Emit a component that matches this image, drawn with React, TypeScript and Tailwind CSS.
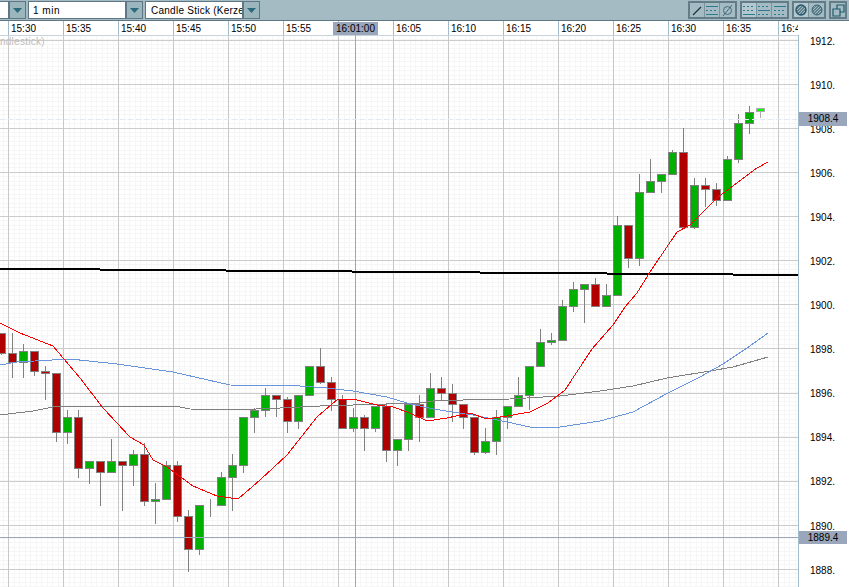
const candles: [number, "g" | "r", number, number, number, number][] = [
  [1.5, "r", 333, 353, 333, 355],
  [12.5, "r", 353, 362, 333, 378],
  [23.5, "g", 351, 362, 344, 378],
  [34.5, "r", 351, 371, 351, 376],
  [45.5, "r", 371, 373, 366, 400],
  [56.5, "r", 373, 432, 373, 442],
  [67.5, "g", 417, 432, 410, 444],
  [78.5, "r", 417, 468, 410, 478],
  [89.5, "g", 461, 468, 461, 484],
  [100.5, "r", 461, 472, 461, 506],
  [111.5, "g", 461, 472, 439, 472],
  [122.5, "r", 461, 465, 461, 511],
  [133.5, "g", 454, 465, 450, 486],
  [144.5, "r", 454, 501, 443, 506],
  [155.5, "g", 499, 501, 483, 524],
  [166.5, "g", 465, 499, 461, 499],
  [177.5, "r", 465, 516, 461, 522],
  [188.5, "r", 516, 549, 510, 572],
  [199.5, "g", 505, 549, 505, 555],
  [210.5, "g", 505, 505, 499, 517],
  [221.5, "g", 477, 505, 472, 505],
  [232.5, "g", 465, 477, 454, 511],
  [243.5, "g", 417, 465, 417, 473],
  [254.5, "g", 410, 417, 408, 433],
  [265.5, "g", 395, 410, 388, 417],
  [276.5, "r", 395, 399, 395, 417],
  [287.5, "r", 399, 421, 397, 433],
  [298.5, "g", 395, 421, 395, 429],
  [309.5, "g", 366, 395, 366, 395],
  [320.5, "r", 366, 382, 348, 384],
  [331.5, "r", 382, 399, 377, 411],
  [342.5, "r", 399, 428, 395, 428],
  [353.5, "g", 417, 428, 408, 432],
  [364.5, "r", 417, 428, 415, 451],
  [375.5, "g", 406, 428, 406, 432],
  [386.5, "r", 406, 450, 403, 462],
  [397.5, "g", 439, 450, 439, 466],
  [408.5, "g", 404, 439, 404, 451],
  [419.5, "r", 404, 417, 395, 442],
  [430.5, "g", 388, 417, 373, 417],
  [441.5, "r", 388, 393, 377, 400],
  [452.5, "r", 393, 404, 384, 422],
  [463.5, "r", 404, 417, 404, 429],
  [474.5, "r", 417, 452, 417, 455],
  [485.5, "g", 441, 452, 428, 454],
  [496.5, "g", 417, 441, 410, 455],
  [507.5, "g", 406, 417, 406, 429],
  [518.5, "g", 395, 406, 377, 406],
  [529.5, "g", 366, 395, 366, 410],
  [540.5, "g", 342, 366, 329, 366],
  [551.5, "g", 340, 342, 333, 345],
  [562.5, "g", 306, 340, 300, 340],
  [573.5, "g", 289, 306, 282, 312],
  [584.5, "g", 284, 289, 284, 323],
  [595.5, "r", 284, 306, 278, 306],
  [606.5, "g", 295, 306, 284, 306],
  [617.5, "g", 225, 295, 216, 295],
  [628.5, "r", 225, 258, 225, 268],
  [639.5, "g", 192, 258, 174, 266],
  [650.5, "g", 181, 192, 159, 192],
  [661.5, "g", 174, 181, 174, 193],
  [672.5, "g", 152, 174, 150, 174],
  [683.5, "r", 152, 227, 128, 227],
  [694.5, "g", 185, 227, 178, 229],
  [705.5, "r", 185, 189, 178, 207],
  [716.5, "r", 189, 200, 183, 206],
  [727.5, "g", 159, 200, 156, 200],
  [738.5, "g", 123, 159, 114, 163],
  [749.5, "g", 112, 123, 106, 134],
];

const redLine =
  "0,323 20,333 53,346 80,378 103,408 130,437 144,445 153,460 167,467 193,486 217,496 238,499 260,480 287,455 317,417 338,399 357,400 377,405 393,407 410,413 427,421 447,418 470,413 487,419 507,416 530,412 548,403 565,390 592,349 613,325 625,307 637,293 650,272 677,232 690,225 717,198 737,183 757,168 768,162";
const blueLine =
  "0,365 17,362 70,359 117,364 173,372 230,385 300,386 327,388 353,391 387,397 407,403 433,409 473,415 507,422 530,427 560,427 600,421 633,412 668,393 700,377 723,364 747,348 768,333";
const greyLine =
  "0,415 33,411 58,406 123,406 180,407 190,409 233,410 280,408 320,406 387,404 420,403 433,401 463,400 510,399 560,396 600,391 633,386 667,378 710,371 733,367 768,357";

const blackLine = [
  [0, 100, 269],
  [100, 226, 270],
  [226, 352, 271],
  [352, 480, 272],
  [480, 607, 273],
  [607, 733, 274],
  [733, 798, 275],
];

const majorY = [40, 84, 128, 172, 216, 260, 304, 348, 393, 437, 481, 525, 569];
const majorX = [8, 63, 118, 173, 228, 283, 338, 393, 448, 503, 558, 613, 668, 723, 778];
const minorY = Array.from({ length: 126 }, (_, i) => Math.round(35 + i * 4.41) + 0.5);
const minorX = Array.from({ length: 146 }, (_, i) => Math.round(2.5 + i * 5.5) + 0.5);

const times = ["15:30", "15:35", "15:40", "15:45", "15:50", "15:55", "", "16:05", "16:10", "16:15", "16:20", "16:25", "16:30", "16:35", "16:40"];
const prices = ["1912.", "1910.", "1908.", "1906.", "1904.", "1902.", "1900.", "1898.", "1896.", "1894.", "1892.", "1890.", "1888."];

function Arrow() {
  return (
    <div className="w-[17px] h-[18px] bg-[#9cb6be] border border-[#5f7684] flex items-center justify-center">
      <svg width="9" height="5" viewBox="0 0 9 5">
        <path d="M0 0h9L4.5 5z" fill="#2a6a7c" />
      </svg>
    </div>
  );
}

// each line of the icon is either solid or dashed
function Lines({ dash }: { dash: [boolean, boolean, boolean] }) {
  return (
    <svg width="12" height="12" viewBox="0 0 12 12" shapeRendering="crispEdges">
      <path d="M0 2.500h12" stroke="#2a7a90" strokeDasharray={dash[0] ? "2 2" : undefined} />
      <path d="M0 6.500h12" stroke="#2a7a90" strokeDasharray={dash[1] ? "2 2" : undefined} />
      <path d="M0 10.500h12" stroke="#2a7a90" strokeDasharray={dash[2] ? "2 2" : undefined} />
    </svg>
  );
}

function Group({ children }: { children: React.ReactNode }) {
  return <div className="flex border-2 border-[#647b88] divide-x divide-[#7d929d]">{children}</div>;
}

function Cell({ children, pressed }: { children: React.ReactNode; pressed?: boolean }) {
  return (
    <div className={pressed ? "w-[15px] h-[14px] flex items-center justify-center bg-[#b4c8cf]" : "w-[15px] h-[14px] flex items-center justify-center"}>
      {children}
    </div>
  );
}

function Hatch({ ring }: { ring?: boolean }) {
  return (
    <svg width="12" height="12" viewBox="0 0 12 12">
      <circle cx="6" cy="6" r="5" fill="#5f7f8c" />
      <path d="M2.500 3.500l2-2M1.500 6.500l5-5M2.500 8.500l6-6M4 10l6-6M7 10l3-3" stroke="#c4d4da" strokeWidth="0.700" />
      <circle cx="6" cy="6" r="5" fill="none" stroke="#24586a" strokeWidth={ring ? 1.400 : 0.800} />
    </svg>
  );
}

export default function App() {
  return (
    <div className="w-[849px] h-[587px] overflow-hidden relative bg-white flex flex-col font-['Liberation_Sans',Arial,sans-serif] text-[10px] text-black">
      {/* toolbar */}
      <div className="h-[21px] shrink-0 bg-[#a5bbc3] border-b border-[#5f7684] flex items-center">
        <div className="w-[9px] h-[18px] bg-white border-y border-r border-[#5f7684]" />
        <Arrow />
        <div className="w-[98px] h-[18px] ml-[2px] bg-white border border-[#5f7684] flex items-center pl-[4px] text-[10px] tracking-[0.5px]">1 min</div>
        <Arrow />
        <div className="w-[98px] h-[18px] ml-[2px] bg-white border border-[#5f7684] flex items-center pl-[5px] tracking-[0.25px] whitespace-nowrap overflow-hidden">Candle Stick (Kerze</div>
        <Arrow />
        <div className="ml-auto pr-[2px] flex items-center gap-[3px]">
          <Group>
            <Cell>
              <svg width="12" height="12" viewBox="0 0 12 12"><path d="M2 11L10 3" stroke="#24343c" strokeWidth="1.200" /></svg>
            </Cell>
            <Cell><Lines dash={[false, true, false]} /></Cell>
            <Cell>
              <svg width="13" height="13" viewBox="0 0 13 13" fill="none"><circle cx="6.500" cy="6.500" r="4" stroke="#2f5866" strokeWidth="0.800" /><path d="M2 12L11 1" stroke="#2f5866" strokeWidth="0.800" /></svg>
            </Cell>
          </Group>
          <Group>
            <Cell pressed><Lines dash={[true, true, false]} /></Cell>
            <Cell><Lines dash={[true, false, true]} /></Cell>
            <Cell><Lines dash={[false, true, true]} /></Cell>
          </Group>
          <Group>
            <Cell pressed><Hatch ring /></Cell>
            <Cell><Hatch /></Cell>
          </Group>
          <Group>
            <div className="w-[14px] h-[14px] flex items-center justify-center">
              <svg width="13" height="13" viewBox="0 0 13 13" fill="none" stroke="#1f5c70" strokeWidth="1.200"><path d="M1 5h7v7H1z" /><path d="M5 5V1h7v7H8" /></svg>
            </div>
          </Group>
        </div>
      </div>

      {/* time axis */}
      <div className="h-[14px] shrink-0 flex bg-white pl-[8px] w-[798px] overflow-hidden">
        {times.map((t, i) => (
          <div key={i} className="w-[55px] shrink-0 border-l border-[#a0bcc8] pl-[2px] leading-[15px] whitespace-nowrap">{t}</div>
        ))}
      </div>

      {/* chart and price scale */}
      <div className="flex flex-1 min-h-0">
        <svg width="799" height="552" viewBox="0 35 799 552" className="shrink-0 block">
          <g shapeRendering="crispEdges">
            {minorY.map((y) => (
              <line key={y} x1="0" x2="798" y1={y} y2={y} stroke="#f6f6f6" />
            ))}
            {minorX.map((x) => (
              <line key={x} x1={x} x2={x} y1="35" y2="587" stroke="#f6f6f6" />
            ))}
            {majorY.map((y) => (
              <line key={y} x1="0" x2="798" y1={y + 0.5} y2={y + 0.5} stroke="#cccccc" />
            ))}
            {majorX.map((x) => (
              <line key={x} x1={x + 0.5} x2={x + 0.5} y1="35" y2="587" stroke="#c8c8c8" />
            ))}
            <line x1="0" x2="798" y1="35.5" y2="35.5" stroke="#c8d4da" />
            <line x1="798.5" x2="798.5" y1="35" y2="587" stroke="#a0bcc8" />
            <line x1="355.5" x2="355.5" y1="35" y2="587" stroke="#9aa6bc" />
            {candles.map(([x, c, top, bottom, hi, lo]) => (
              <g key={x}>
                <line x1={x} x2={x} y1={hi} y2={lo} stroke="#808080" />
                <rect x={x - 4} y={top + 0.5} width="8" height={Math.max(bottom - top, 0)} fill={c === "g" ? "#00b000" : "#b00000"} stroke="#808080" />
              </g>
            ))}
            <line x1="760.5" x2="760.5" y1="112" y2="118" stroke="#aaaaaa" />
            <rect x="756.5" y="108.5" width="8" height="3" fill="#00ff00" stroke="#aaaaaa" />
            {blackLine.map(([a, b, y]) => (
              <rect key={a} x={a} y={y - 1} width={b - a} height="2" fill="#000000" />
            ))}
            <line x1="0" x2="798" y1="119.5" y2="119.5" stroke="#e2e8f5" strokeDasharray="5 3" />
            <line x1="0" x2="798" y1="537.5" y2="537.5" stroke="#9aa6bc" />
          </g>
          <g fill="none" strokeWidth="1" shapeRendering="crispEdges">
            <polyline points={greyLine} stroke="#808080" />
            <polyline points={blueLine} stroke="#6a94dc" />
            <polyline points={redLine} stroke="#ff0000" />
          </g>
        </svg>
        <div className="w-[50px] overflow-hidden">
          <div className="flex flex-col mt-[-16px] pl-[11px]">
            {prices.map((p) => (
              <div key={p} className="h-[44.1px] shrink-0 flex items-center">{p}</div>
            ))}
          </div>
        </div>
      </div>

      {/* overlays */}
      <div className="absolute left-0 top-[36px] text-[#bdbdbd] leading-[12px] tracking-[0.25px]">ndlestick)</div>
      <div className="absolute left-[333px] top-[22px] w-[45px] h-[13px] bg-[#9aa6bc] text-center leading-[14px]">16:01:00</div>
      <div className="absolute left-[799px] top-[112px] w-[48px] h-[14px] bg-[#9aa6bc] text-center leading-[14px]">1908.4</div>
      <div className="absolute left-[799px] top-[531px] w-[48px] h-[13px] bg-[#9aa6bc] text-center leading-[13px]">1889.4</div>
    </div>
  );
}
